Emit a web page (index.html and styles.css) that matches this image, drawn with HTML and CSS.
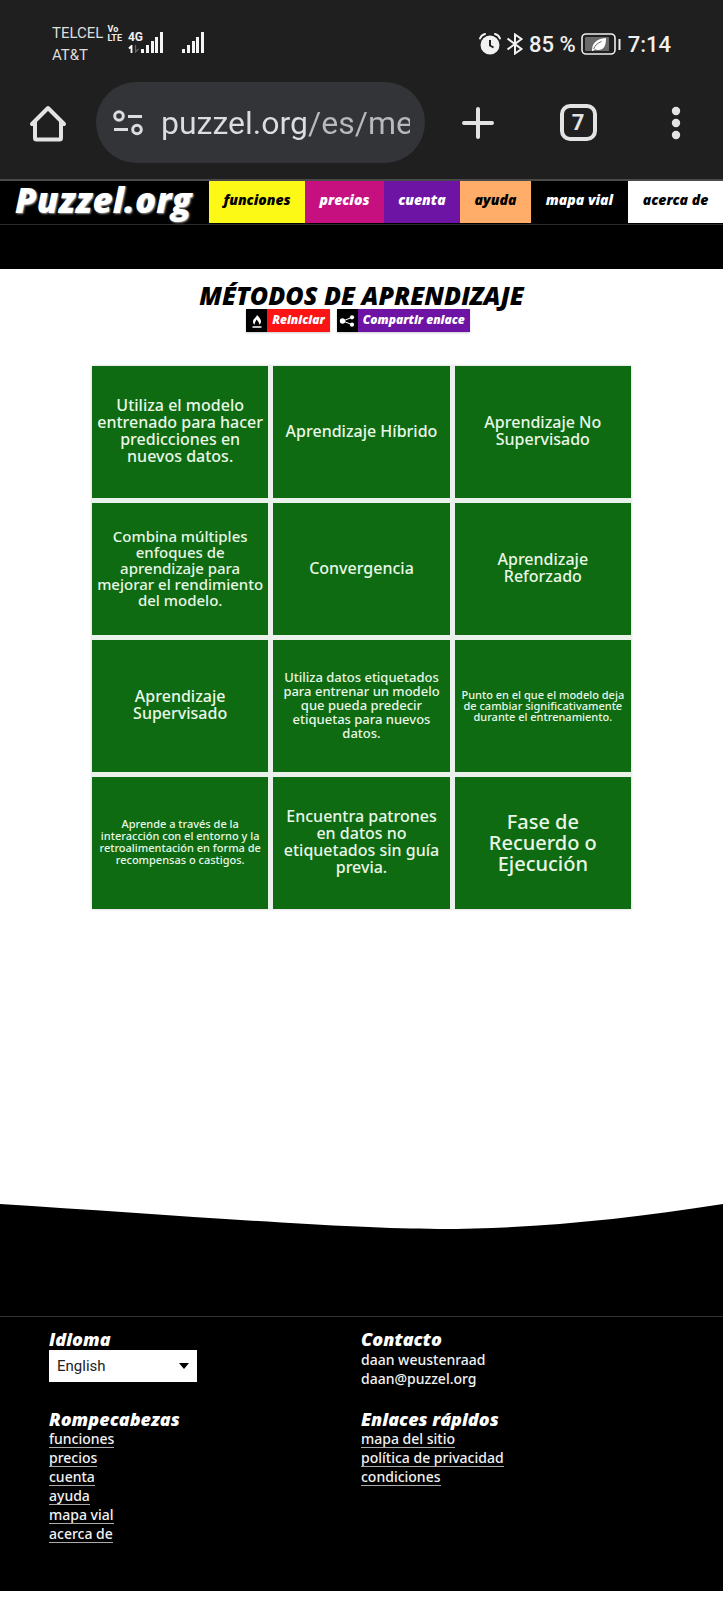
FILE: index.html
```
<!DOCTYPE html>
<html lang="es">
<head>
<meta charset="utf-8">
<meta name="viewport" content="width=device-width, initial-scale=1">
<title>Métodos de aprendizaje - Puzzel.org</title>
<link rel="stylesheet" href="styles.css">
</head>
<body>
<header class="browser">
  <div class="status">
    <div class="carriers"><span>TELCEL</span><span>AT&amp;T</span></div>
    <div class="volte"><span>Vo</span><span>LTE</span></div>
    <div class="network">
      <span class="gen">4G</span>
      <svg class="arrows" width="12" height="8" viewBox="0 0 12 8"><path d="M3.500 8V1L1 3.500" fill="none" stroke="#fff" stroke-width="1.800"/><path d="M7.500 0v7l3-3" fill="none" stroke="#666" stroke-width="1.200"/></svg>
    </div>
    <svg class="bars" width="22" height="21" viewBox="0 0 22 21" fill="#f4f4f4"><path d="M0 17h3v4H0zM5 13h3v8H5zM10 9h3v12h-3zM14 5h3v16h-3zM19 0h3v21h-3z"/></svg>
    <svg class="bars second" width="22" height="21" viewBox="0 0 22 21" fill="#f4f4f4"><path d="M0 17h3v4H0zM5 13h3v8H5zM10 9h3v12h-3zM14 5h3v16h-3zM19 0h3v21h-3z"/></svg>
    <div class="system">
      <svg width="22" height="22" viewBox="0 0 22 22"><circle cx="11" cy="12" r="9.500" fill="#f1f1f1"/><path d="M1 5.500C2 3 4 1.500 6 1M16 1c2 .5 4 2 5 4.500" fill="none" stroke="#1f1f1f" stroke-width="5"/><path d="M1 5.500C2 3 4 1.500 6 1M16 1c2 .5 4 2 5 4.500" fill="none" stroke="#f1f1f1" stroke-width="2" stroke-linecap="round"/><path d="M11 7v5.500l3.500 2" fill="none" stroke="#1f1f1f" stroke-width="2"/></svg>
      <svg width="18" height="22" viewBox="0 0 18 22" fill="none" stroke="#f1f1f1" stroke-width="2"><path d="M1.500 5.500l14 10.500L9 20.500V1.500L15.500 6 1.500 16.500"/></svg>
      <span class="battery-text">85 %</span>
      <svg width="40" height="22" viewBox="0 0 40 22"><rect x="1" y="1" width="33" height="20" rx="4" fill="none" stroke="#eee" stroke-width="1.600"/><rect x="4" y="4" width="24" height="14" rx="1" fill="#6a6a6a"/><rect x="37.500" y="6" width="2" height="11" fill="#eee"/><path d="M11 18C11 10 15 6 25 5c0 8-2 12-8 12-1.500 0-2-.3-3-.8L12 18z" fill="#fff"/><path d="M12.500 16c2-4 4-6 8-7.500" stroke="#6a6a6a" fill="none"/></svg>
      <span class="clock">7:14</span>
    </div>
  </div>
  <div class="toolbar">
    <button class="tool home" aria-label="Inicio"><svg width="38" height="38" viewBox="0 0 38 38" fill="none" stroke="#e3e3e3" stroke-width="4" stroke-linejoin="round" stroke-linecap="round"><path d="M3 20L19 4l16 16M6 18v16a1.500 1.500 0 0 0 1.500 1.500h23a1.500 1.500 0 0 0 1.500-1.500V18"/></svg></button>
    <div class="address">
      <svg width="30" height="26" viewBox="0 0 30 26" fill="none" stroke="#dcdcde" stroke-width="3"><circle cx="6" cy="6" r="4.300"/><path d="M15 6.500h14M1 19.500h14"/><circle cx="24" cy="19.500" r="4.300"/></svg>
      <input class="url" type="text" aria-label="Dirección" value="puzzel.org/es/me">
    </div>
    <button class="tool" aria-label="Nueva pestaña"><svg width="32" height="32" viewBox="0 0 32 32" stroke="#e3e3e3" stroke-width="4" stroke-linecap="round"><path d="M16 2v28M2 16h28"/></svg></button>
    <button class="tool wide" aria-label="Pestañas"><span class="tabs">7</span></button>
    <button class="tool narrow" aria-label="Menú"><svg width="10" height="34" viewBox="0 0 10 34" fill="#e3e3e3"><circle cx="5" cy="5" r="4.200"/><circle cx="5" cy="17" r="4.200"/><circle cx="5" cy="29" r="4.200"/></svg></button>
  </div>
</header>

<nav class="nav">
  <a class="logo" href="#">Puzzel.org</a>
  <a class="nav-link yellow" href="#">funciones</a>
  <a class="nav-link pink" href="#">precios</a>
  <a class="nav-link purple" href="#">cuenta</a>
  <a class="nav-link orange" href="#">ayuda</a>
  <a class="nav-link black" href="#">mapa vial</a>
  <a class="nav-link white" href="#">acerca de</a>
</nav>
<div class="band"></div>

<main class="main">
  <h1 class="title">MÉTODOS DE APRENDIZAJE</h1>
  <div class="actions">
    <button class="action red"><span class="action-icon"><svg width="12" height="14" viewBox="0 0 12 14"><path d="M6 1c2.500 2.500 4 4.500 4 6.500 0 1.500-.7 2.500-1.700 3.200C8.300 9 7.500 7.500 5.500 5.500 5 7 3.700 8 3.700 10.700 2.600 10 2 9 2 7.500 2 5 5 4 6 1z" fill="#fff"/><path d="M1.500 13h9" stroke="#fff" stroke-width="1.500"/></svg></span><span class="action-text">Reiniciar</span></button>
    <button class="action violet"><span class="action-icon"><svg width="16" height="12" viewBox="0 0 16 12"><path d="M13 2.300L4 6l9 3.700" fill="none" stroke="#fff"/><circle cx="3.500" cy="6" r="2.700" fill="#fff"/><circle cx="13" cy="2.300" r="2.100" fill="#fff"/><circle cx="13" cy="9.700" r="2.100" fill="#fff"/></svg></span><span class="action-text">Compartir enlace</span></button>
  </div>
  <div class="board">
    <button class="tile t16">Utiliza el modelo<br>entrenado para hacer<br>predicciones en<br>nuevos datos.</button>
    <button class="tile t16">Aprendizaje Híbrido</button>
    <button class="tile t16">Aprendizaje No<br>Supervisado</button>
    <button class="tile t15">Combina múltiples<br>enfoques de<br>aprendizaje para<br>mejorar el rendimiento<br>del modelo.</button>
    <button class="tile t16">Convergencia</button>
    <button class="tile t16">Aprendizaje<br>Reforzado</button>
    <button class="tile t16">Aprendizaje<br>Supervisado</button>
    <button class="tile t13">Utiliza datos etiquetados<br>para entrenar un modelo<br>que pueda predecir<br>etiquetas para nuevos<br>datos.</button>
    <button class="tile t11">Punto en el que el modelo deja<br>de cambiar significativamente<br>durante el entrenamiento.</button>
    <button class="tile t11 loose">Aprende a través de la<br>interacción con el entorno y la<br>retroalimentación en forma de<br>recompensas o castigos.</button>
    <button class="tile t16">Encuentra patrones<br>en datos no<br>etiquetados sin guía<br>previa.</button>
    <button class="tile t20">Fase de<br>Recuerdo o<br>Ejecución</button>
  </div>
</main>

<footer class="footer">
  <svg class="wave" viewBox="0 0 723 26" preserveAspectRatio="none"><path d="M0 0H723C620 16 530 25 438 25S160 10 0 0z" fill="#fff"/></svg>
  <div class="columns">
    <section class="block">
      <h2 class="heading"><label for="language">Idioma</label></h2>
      <div class="select-box">
        <select id="language" class="select"><option>English</option><option>Español</option></select>
        <svg class="caret" width="10" height="6" viewBox="0 0 10 6"><path d="M0 0h10L5 6z"/></svg>
      </div>
    </section>
    <section class="block">
      <h2 class="heading">Contacto</h2>
      <p class="line">daan weustenraad</p>
      <p class="line">daan@puzzel.org</p>
    </section>
    <section class="block">
      <h2 class="heading">Rompecabezas</h2>
      <ul class="links">
        <li><a href="#">funciones</a></li>
        <li><a href="#">precios</a></li>
        <li><a href="#">cuenta</a></li>
        <li><a href="#">ayuda</a></li>
        <li><a href="#">mapa vial</a></li>
        <li><a href="#">acerca de</a></li>
      </ul>
    </section>
    <section class="block">
      <h2 class="heading">Enlaces rápidos</h2>
      <ul class="links">
        <li><a href="#">mapa del sitio</a></li>
        <li><a href="#">política de privacidad</a></li>
        <li><a href="#">condiciones</a></li>
      </ul>
    </section>
  </div>
</footer>
</body>
</html>
```
FILE: styles.css
```
* { box-sizing: border-box; }
body { margin: 0; padding-bottom: 10px; background: #fff; font-family: "Noto Sans", sans-serif; }
button { border: 0; padding: 0; margin: 0; background: none; font: inherit; color: inherit; }
a { color: inherit; text-decoration: none; }
svg { display: block; flex: none; }

.browser { background: #1f1f1f; color: #f0f0f0; font-family: Roboto, sans-serif; border-bottom: 2px solid #4a4a4a; padding-bottom: 16px; }
.status { display: flex; align-items: flex-start; height: 82px; padding: 22px 52px 0; }
.carriers { display: flex; flex-direction: column; font-size: 15px; line-height: 22px; color: #ddd; }
.volte { display: flex; flex-direction: column; margin: 3px 0 0 4px; font-size: 9px; line-height: 9px; font-weight: 700; }
.network { margin: 9px 0 0 6px; font-size: 12px; line-height: 13px; font-weight: 700; width: 13px; }
.arrows { margin-top: 1px; }
.bars { margin-top: 10px; }
.second { margin-left: 19px; }
.system { display: flex; align-items: center; gap: 5px; height: 44px; margin-left: auto; font-size: 22px; font-weight: 500; }
.clock { margin-left: 2px; }
.toolbar { display: flex; align-items: center; }
.tool { display: flex; align-items: center; justify-content: center; width: 98px; height: 81px; }
.home { width: 96px; }
.wide { width: 102px; }
.narrow { width: 94px; }
.address { display: flex; align-items: center; gap: 18px; flex: 1; min-width: 0; height: 81px; margin-right: 4px; padding: 0 15px 0 17px; border-radius: 41px; background: #333438; }
.url { flex: 1; min-width: 0; width: 100%; padding: 0; border: 0; font: 400 32px/44px Roboto, sans-serif; color: transparent; background: linear-gradient(90deg, #dcdde0 58%, #b8b9bc 60%); background-clip: text; -webkit-background-clip: text; }
.tabs { display: flex; align-items: center; justify-content: center; width: 37px; height: 37px; border: 4px solid #e3e3e3; border-radius: 10px; font-size: 22px; font-weight: 700; color: #e3e3e3; }

.nav { display: grid; grid-template-columns: 209fr 96fr 79fr 76fr 71fr 97fr 95fr; height: 44px; background: #000; border-bottom: 1px solid #2c2c2c; padding-bottom: 1px; font-family: "Open Sans", sans-serif; font-weight: 800; font-style: italic; white-space: nowrap; }
.logo { padding-left: 15px; font-size: 35px; line-height: 38px; color: #fff; text-shadow: 1px 1px 2px #999; }
.nav-link { text-align: center; font-size: 14px; line-height: 38px; color: #fff; }
.yellow { background: #fbf915; color: #000; }
.pink { background: #c7107f; }
.purple { background: #6d14a4; }
.orange { background: #ffad69; color: #000; }
.black { background: #000; }
.white { background: #fff; color: #000; }
.band { height: 44px; background: #000; }

.main { padding: 12px 92px 295px; }
.title { margin: 0; text-align: center; white-space: nowrap; font: italic 800 25px/28px "Open Sans", sans-serif; }
.actions { display: flex; justify-content: center; gap: 7px; padding-right: 7px; }
.action { display: flex; height: 23px; font: italic 800 12px/22px "Open Sans", sans-serif; color: #fff; box-shadow: 0 1px 2px #ccc; }
.action-icon { display: flex; align-items: center; justify-content: center; width: 21px; height: 100%; background: #000; }
.action-text { padding: 0 5px; }
.red { background: #fb1414; }
.violet { background: #6d14a4; }
.board { display: grid; grid-template-columns: repeat(3, 1fr); gap: 5px; margin-top: 34px; background: #eaf1ea; box-shadow: 0 0 3px #ccc; }
.tile { height: 132px; padding-bottom: 2px; background: #0e6b12; color: #e9f7e6; font-weight: 500; text-align: center; white-space: nowrap; }
.t11 { font-size: 11px; line-height: 11px; }
.loose { line-height: 12px; }
.t13 { font-size: 13px; line-height: 14px; }
.t15 { font-size: 15px; line-height: 16px; }
.t16 { font-size: 16px; line-height: 17px; }
.t20 { font-size: 20px; line-height: 21px; }

.footer { background: #000; color: #f2f2f2; }
.wave { width: 100%; height: 26px; }
.columns { display: grid; grid-template-columns: 312fr 313fr; row-gap: 20px; margin-top: 86px; padding: 11px 49px 47px; border-top: 1px solid #333; }
.heading { margin: 0; font: italic 800 18px/22px "Open Sans", sans-serif; color: #fff; }
.line { margin: 0; font-size: 14px; font-weight: 500; line-height: 19px; }
.links { margin: 0; padding: 0; list-style: none; font-size: 14px; font-weight: 500; line-height: 19px; }
.links a { display: inline-block; height: 18px; line-height: 18px; border-bottom: 1px solid #aaa; vertical-align: top; }
.links li { height: 19px; }
.select-box { position: relative; width: 148px; }
.select { appearance: none; width: 100%; height: 32px; padding: 0 8px; border: 0; border-radius: 0; background: #fff; color: #222; font: 15px/32px Roboto, sans-serif; }
.caret { position: absolute; right: 8px; top: 13px; }
```
